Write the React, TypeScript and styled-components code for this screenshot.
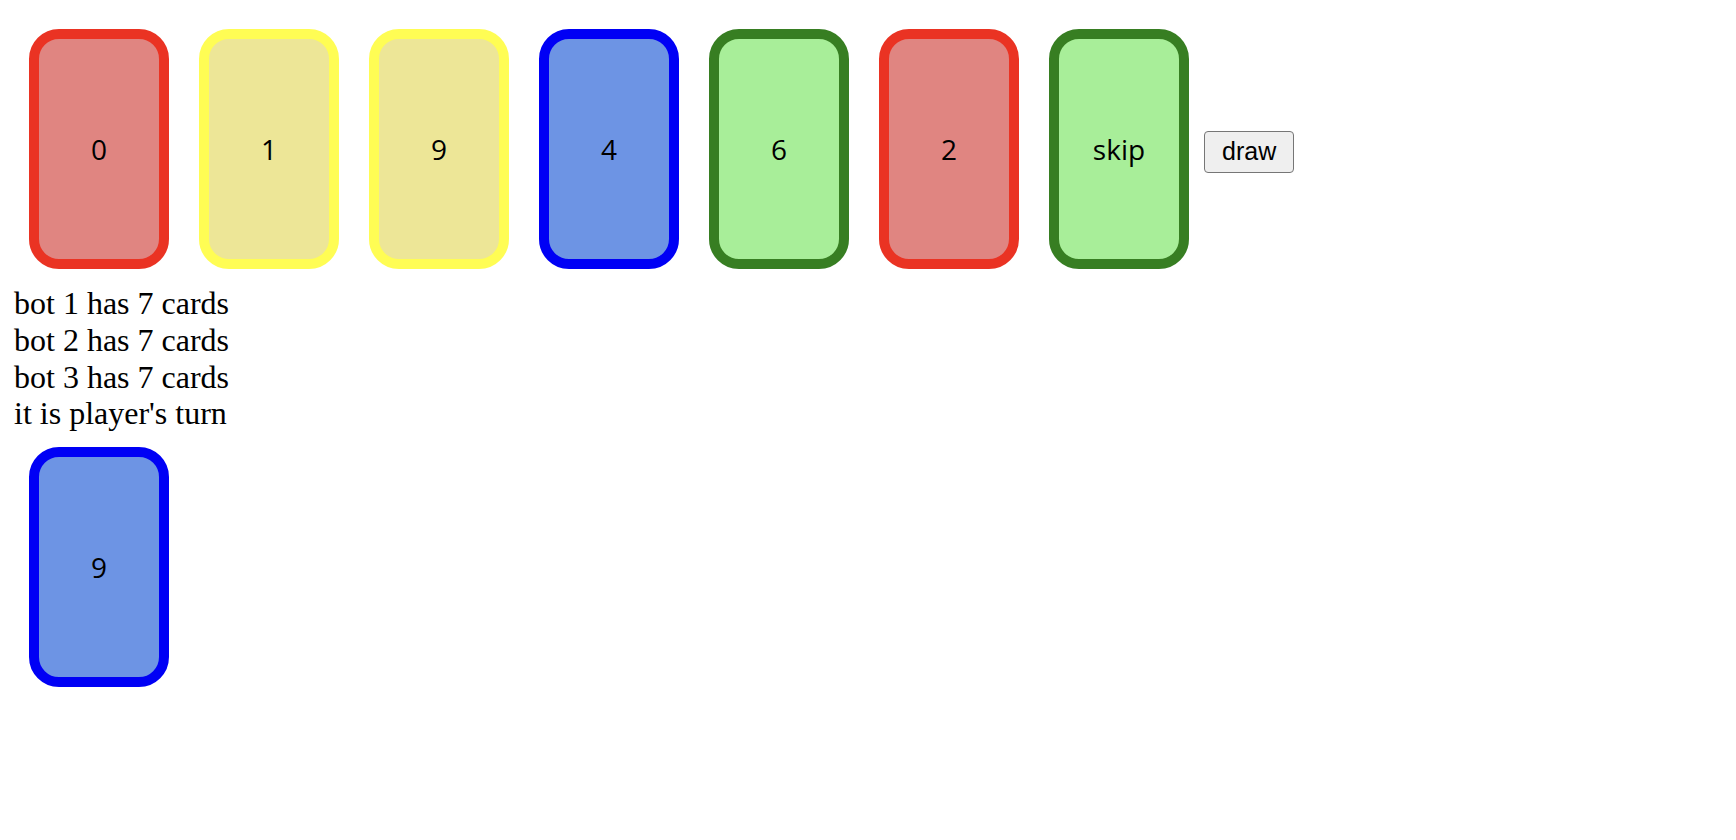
import React from "react";
import styled, { createGlobalStyle } from "styled-components";

const Global = createGlobalStyle`
  html, body { margin: 0; padding: 0; background: #ffffff; }
  body { font-family: "Liberation Serif", "Times New Roman", serif; color: #000; }
`;

type CardColor = "red" | "yellow" | "blue" | "green";

const palette: Record<CardColor, { border: string; fill: string }> = {
  red: { border: "#ea3323", fill: "#e08581" },
  yellow: { border: "#fffd54", fill: "#ede697" },
  blue: { border: "#0000f5", fill: "#6d94e4" },
  green: { border: "#377e22", fill: "#a8ee99" },
};

const Page = styled.div`
  display: flex;
  flex-direction: column;
`;

const HandRow = styled.div`
  display: flex;
  align-items: baseline;
  padding: 29px 0 0 14px;
`;

const Card = styled.div<{ $color: CardColor }>`
  box-sizing: border-box;
  width: 140px;
  height: 240px;
  margin: 0 15px;
  border: 10px solid ${(p) => palette[p.$color].border};
  background: ${(p) => palette[p.$color].fill};
  border-radius: 30px;
  display: flex;
  align-items: center;
  justify-content: center;
  font-family: "Open Sans", "DejaVu Sans", sans-serif;
  font-size: 28px;
  color: #000;
  flex-shrink: 0;
`;

const DrawButton = styled.button`
  font-family: "Liberation Sans", Arial, sans-serif;
  font-size: 25px;
  line-height: 29px;
  padding: 5px 17px 6px;
  background: #efefef;
  color: #000;
  border: 1px solid #767676;
  border-radius: 4px;
`;

const Status = styled.div`
  margin-top: 16px;
  padding-left: 14px;
  font-size: 32px;
  line-height: 36.8px;
`;

const Line = styled.div``;

const Pile = styled.div`
  display: flex;
  margin-top: 15px;
  padding-left: 14px;
`;

const hand: { color: CardColor; label: string }[] = [
  { color: "red", label: "0" },
  { color: "yellow", label: "1" },
  { color: "yellow", label: "9" },
  { color: "blue", label: "4" },
  { color: "green", label: "6" },
  { color: "red", label: "2" },
  { color: "green", label: "skip" },
];

export default function App() {
  return (
    <Page>
      <Global />
      <HandRow>
        {hand.map((c, i) => (
          <Card key={i} $color={c.color}>
            {c.label}
          </Card>
        ))}
        <DrawButton>draw</DrawButton>
      </HandRow>
      <Status>
        <Line>bot 1 has 7 cards</Line>
        <Line>bot 2 has 7 cards</Line>
        <Line>bot 3 has 7 cards</Line>
        <Line>it is player's turn</Line>
      </Status>
      <Pile>
        <Card $color="blue">9</Card>
      </Pile>
    </Page>
  );
}
